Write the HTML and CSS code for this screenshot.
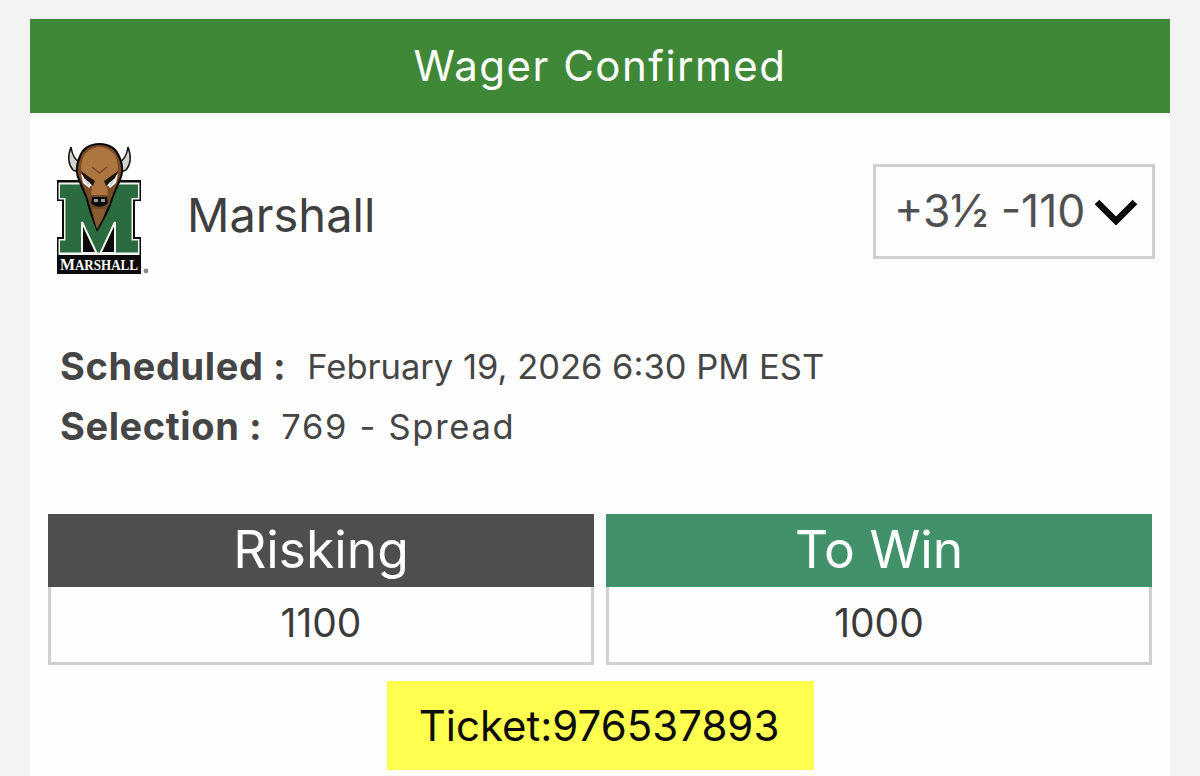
FILE: index.html
```html
<!DOCTYPE html>
<html lang="en">
<head>
<meta charset="utf-8">
<title>Wager Confirmed</title>
<link rel="stylesheet" href="styles.css">
</head>
<body>
<main class="card">
  <header class="banner">Wager Confirmed</header>
  <section class="team-row">
    <svg class="logo" viewBox="0 0 94 134" aria-label="Marshall logo">
      <path class="k" d="M1 37H85V58H79V94H85V131H1V94H6V58H1Z"/>
      <path class="w" d="M2.5 39.5H83.5V56.5H77V96H83.5V112H2.5V96H8V56.5H2.5Z"/>
      <path class="g" d="M4 41.5H82V55H75.5V97.5H82V109.5H4V97.5H9.5V55H4Z"/>
      <path class="gap" d="M26 79V110H40.5ZM59 79V110H44.5Z"/>
      <path class="k" d="M1 112H85V131H1Z"/>
      <text class="wordmark" x="4" y="127" textLength="78" lengthAdjust="spacingAndGlyphs"><tspan class="wm-big">M</tspan>ARSHALL</text>
      <circle class="reg" cx="90" cy="128" r="2.4"/>
      <path class="horn" d="M17 27C12 21 12 12 15 4C16 12 19 18 26 21L24 30Z"/>
      <path class="horn" d="M70 27C75 21 75 12 72 4C71 12 68 18 61 21L63 30Z"/>
      <path class="k" d="M43.5 0C33 0 26 5 23 13C19 21 19 30 22 37C25 45 28 50 30 56C32 66 36 76 41 89C49 76 54 66 57 56C59 50 62 45 65 37C68 30 68 21 64 13C61 5 54 0 43.5 0Z"/>
      <path class="fur-dark" d="M43.5 2C34 2 27 7 25 14C21 22 21 30 24 36C27 44 30 50 32 56C34 65 38 74 41 85C47 74 52 65 55 56C57 50 60 44 63 36C66 30 66 22 62 14C60 7 53 2 43.5 2Z"/>
      <path class="fur" d="M43.5 4C36 4 29 9 27 15C24 22 25 30 28 34L36 44L35 56H52L51 44L59 34C62 30 63 22 60 15C58 9 51 4 43.5 4Z"/>
      <path class="fur-line" d="M36 24L43.5 30L51 24"/>
      <path class="w" d="M25 31L37 40L33 45L27 40ZM62 31L50 40L54 45L60 40Z"/>
      <path class="dark" d="M25 28L39 38L37 43L28 35ZM62 28L48 38L50 43L59 35Z"/>
      <path class="eye" d="M28 36L34 40L32 43ZM59 36L53 40L55 43Z"/>
      <path class="muzzle" d="M35 52H52L54 61C50 68 37 68 33 61Z"/>
      <path class="k" d="M36 54H51L52 60C48 65 39 65 35 60Z"/>
      <path class="grey" d="M38 56H42V59H38ZM45 56H49V59H45Z"/>
      <path class="beard" d="M36 66H50L47 75L41 86L38 76Z"/>
    </svg>
    <h2 class="team">Marshall</h2>
    <div class="odds">
      <span>+3½ -110</span>
      <svg class="chevron" viewBox="0 0 44 28"><path d="M3 5L22 24L41 5"/></svg>
    </div>
  </section>
  <section class="info">
    <p class="line"><b>Scheduled :</b> <span>February 19, 2026 6:30 PM EST</span></p>
    <p class="line tight"><b>Selection :</b> <span class="selection">769 - Spread</span></p>
  </section>
  <section class="amounts">
    <div class="amount">
      <div class="amount-head risk"><span class="nudge">Risking</span></div>
      <div class="amount-value"><span class="nudge">1100</span></div>
    </div>
    <div class="amount">
      <div class="amount-head win"><span class="nudge">To Win</span></div>
      <div class="amount-value"><span class="nudge">1000</span></div>
    </div>
  </section>
  <div class="ticket-wrap"><div class="ticket">Ticket:976537893</div></div>
</main>
</body>
</html>
```
FILE: styles.css
```css
* { box-sizing: border-box; }
html, body { margin: 0; height: 776px; overflow: hidden; }
body {
  background: #f3f3f3;
  padding: 19px 30px 0;
  font-family: "Inter", "Open Sans", sans-serif;
  color: #3f3f3f;
}
.card { background: #fefefe; height: 757px; overflow: hidden; }
.banner {
  height: 94px;
  padding-bottom: 2px;
  background: #3f8838;
  color: #fff;
  font-size: 42px;
  letter-spacing: 1.5px;
  display: flex;
  align-items: center;
  justify-content: center;
}
.team-row {
  display: flex;
  align-items: center;
  padding: 30px 15px 0 26px;
  height: 163px;
}
.logo { width: 94px; height: 134px; flex: none; }
.k { fill: #0b0b0b; }
.w { fill: #f4f4f0; }
.g { fill: #2a6b3f; }
.gap { fill: #0b0b0b; stroke: #f4f4f0; stroke-width: 2; }
.fur { fill: #ad7540; }
.fur-dark { fill: #7a4a26; }
.fur-line { fill: none; stroke: #7a4a26; stroke-width: 1.5; }
.muzzle { fill: #6e4a2c; }
.beard { fill: #8a5a30; }
.dark { fill: #21160e; }
.eye { fill: #c5d3d8; }
.grey { fill: #9a9a9a; }
.horn { fill: #d4d4cf; stroke: #111; stroke-width: 1.5; }
.reg { fill: #8a8a8a; }
.wordmark {
  fill: #fff;
  font-family: "Liberation Serif", serif;
  font-weight: 700;
  font-size: 14px;
}
.wm-big { font-size: 17px; }
.team {
  margin: 9px 0 0 37px;
  font-weight: 400;
  font-size: 47px;
  flex: 1;
}
.odds {
  width: 282px;
  height: 95px;
  margin-top: 4px;
  border: 3px solid #cfcfcf;
  display: flex;
  align-items: center;
  gap: 9px;
  padding: 0 0 2px 18px;
  font-size: 44.5px;
  color: #505050;
  white-space: nowrap;
}
.chevron { width: 44px; height: 28px; flex: none; }
.chevron path { fill: none; stroke: #0a0a0a; stroke-width: 6.5; }
.info { padding: 60px 0 0 30px; }
.line {
  margin: 0;
  height: 60px;
  display: flex;
  align-items: center;
  gap: 21px;
  font-size: 34.5px;
  color: #454545;
}
.tight { gap: 19px; }
.line b { font-weight: 700; font-size: 38px; letter-spacing: 0.6px; }
.selection { letter-spacing: 1.7px; }
.amounts {
  display: grid;
  grid-template-columns: 546px 546px;
  gap: 12px;
  margin: 58px 0 0 18px;
}
.amount { height: 151px; }
.amount-head {
  height: 73px;
  color: #fff;
  font-size: 51.5px;
  display: flex;
  align-items: center;
  justify-content: center;
}
.nudge { margin-bottom: 4px; }
.risk { background: #4e4e4e; }
.win { background: #41926a; }
.amount-value {
  height: 78px;
  border: 3px solid #d0d0d0;
  border-top: 0;
  display: flex;
  align-items: center;
  justify-content: center;
  font-size: 39px;
  color: #3a3a3a;
}
.ticket-wrap { display: flex; justify-content: center; margin-top: 16px; }
.ticket {
  width: 427px;
  height: 89px;
  padding-right: 2px;
  background: #ffff4f;
  color: #0c0c0c;
  font-size: 42px;
  display: flex;
  align-items: center;
  justify-content: center;
}
```
